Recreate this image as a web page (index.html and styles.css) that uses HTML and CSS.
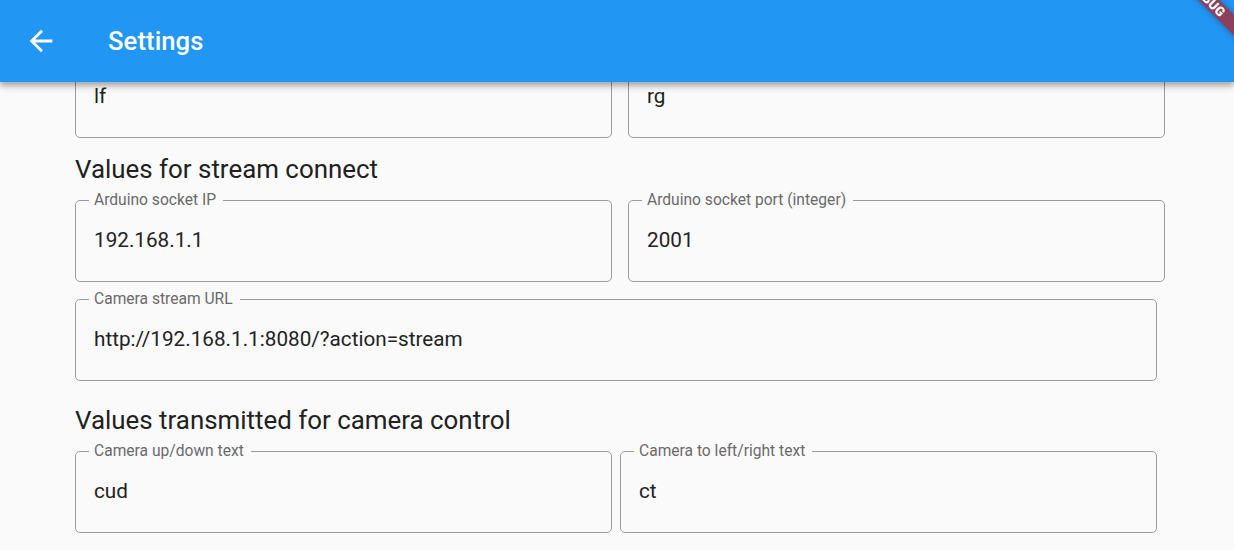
FILE: index.html
```html
<!DOCTYPE html>
<html lang="en">
<head>
<meta charset="utf-8">
<title>Settings</title>
<link rel="stylesheet" href="styles.css">
</head>
<body>
<div class="screen">
  <header class="appbar">
    <button class="back" aria-label="Back">
      <svg viewBox="0 0 24 24" width="34" height="34" aria-hidden="true"><path d="M20 11H7.83l5.59-5.59L12 4l-8 8 8 8 1.41-1.41L7.83 13H20v-2z" fill="#ffffff"/></svg>
    </button>
    <h1 class="title">Settings</h1>
  </header>
  <main class="content">
    <div class="row row-wide gap-16 first-row">
      <fieldset class="field"><legend>Left text</legend><div class="value">lf</div></fieldset>
      <fieldset class="field"><legend>Right text</legend><div class="value">rg</div></fieldset>
    </div>
    <h2 class="section first-section">Values for stream connect</h2>
    <div class="row row-wide gap-16">
      <fieldset class="field"><legend>Arduino socket IP</legend><div class="value">192.168.1.1</div></fieldset>
      <fieldset class="field"><legend>Arduino socket port (integer)</legend><div class="value">2001</div></fieldset>
    </div>
    <div class="row row-narrow single url-row">
      <fieldset class="field"><legend>Camera stream URL</legend><div class="value">http://192.168.1.1:8080/?action=stream</div></fieldset>
    </div>
    <h2 class="section second-section">Values transmitted for camera control</h2>
    <div class="row row-narrow gap-8">
      <fieldset class="field"><legend>Camera up/down text</legend><div class="value">cud</div></fieldset>
      <fieldset class="field"><legend>Camera to left/right text</legend><div class="value">ct</div></fieldset>
    </div>
  </main>
  <div class="debug-banner">DEBUG</div>
</div>
</body>
</html>
```

FILE: styles.css
```css
* { box-sizing: border-box; }

html, body {
  margin: 0;
  padding: 0;
  background: #fafafa;
  font-family: Roboto, "Noto Sans", "Liberation Sans", sans-serif;
}

.screen {
  position: relative;
  width: 1234px;
  height: 550px;
  overflow: hidden;
  background: #fafafa;
}

.appbar {
  position: relative;
  z-index: 2;
  height: 82px;
  display: flex;
  align-items: center;
  padding-left: 24px;
  background: #2196f3;
  box-shadow: 0 3px 5px rgba(0, 0, 0, 0.2), 0 5px 7px rgba(0, 0, 0, 0.12), 0 1px 12px rgba(0, 0, 0, 0.1);
}

.back {
  width: 34px;
  height: 34px;
  padding: 0;
  margin: 0;
  border: 0;
  background: transparent;
  display: flex;
}

.title {
  margin: 0 0 0 50px;
  font-size: 25.6px;
  font-weight: 500;
  color: #ffffff;
  line-height: 30px;
  letter-spacing: 0.1px;
}

.content {
  padding-left: 75px;
}

.row {
  display: grid;
}

.row-wide { width: 1090px; }
.row-narrow { width: 1082px; }
.gap-16 { grid-template-columns: 1fr 1fr; column-gap: 16px; }
.gap-8 { grid-template-columns: 1fr 1fr; column-gap: 8px; }
.single { grid-template-columns: 1fr; }

.first-row { margin-top: -34px; }
.url-row { margin-top: 9px; }

.section {
  margin: 0;
  font-size: 25.9px;
  font-weight: 400;
  line-height: 30px;
  color: #212121;
}

.first-section { margin: 16px 0 8px; }
.second-section { margin: 24px 0 8px; }

.field {
  margin: 0;
  min-width: 0;
  padding: 0 18px 29px;
  border: 1px solid #9c9c9c;
  border-radius: 5px;
}

.field legend {
  padding: 0 7px 0 5px;
  margin-left: -5px;
  font-size: 15.6px;
  line-height: 17px;
  color: #6a6a6a;
}

.value {
  padding-top: 19px;
  font-size: 20.7px;
  line-height: 24px;
  color: #222222;
  white-space: nowrap;
}

.debug-banner {
  position: absolute;
  z-index: 3;
  left: 1157px;
  top: -8px;
  width: 102px;
  height: 15.4px;
  transform: rotate(45deg);
  background: rgba(183, 28, 28, 0.7);
  box-shadow: 0 0 6px rgba(0, 0, 0, 0.3);
  color: #ffffff;
  font-size: 13px;
  font-weight: 900;
  line-height: 15.4px;
  text-align: center;
}
```
